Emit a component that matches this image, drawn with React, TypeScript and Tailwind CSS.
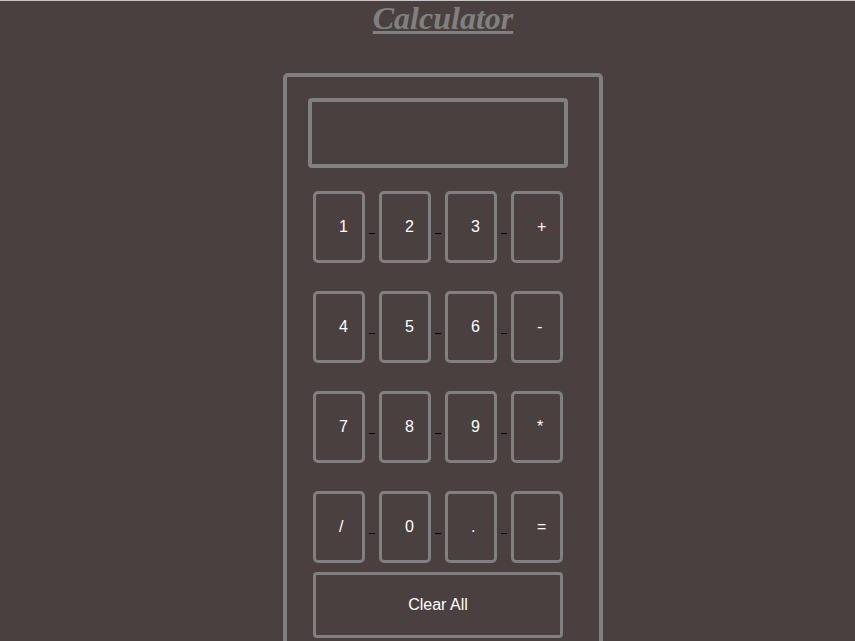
const rows = [
  ["1", "2", "3", "+"],
  ["4", "5", "6", "-"],
  ["7", "8", "9", "*"],
  ["/", "0", ".", "="],
];

function Key({ label }: { label: string }) {
  return (
    <button className="w-[52px] h-[72px] border-[3px] border-[#808080] rounded-[5px] pl-[23px] text-left text-white text-[16px] leading-[18px] bg-transparent">
      {label}
    </button>
  );
}

export default function App() {
  return (
    <div
      className="min-h-screen bg-[#4a403f] border-t border-[#c4c4c4] pl-[31px] overflow-hidden"
      style={{ fontFamily: '"Liberation Sans", Arial, sans-serif' }}
    >
      <h1
        className="text-center text-[32px] leading-[34px] font-bold italic underline text-[#808080]"
        style={{ fontFamily: '"Liberation Serif", "Times New Roman", serif' }}
      >
        Calculator
      </h1>

      <div className="mx-auto mt-[38px] w-[320px] border-4 border-[#808080] rounded-[5px] pt-[21px] pb-[24px]">
        <div className="ml-[21px] w-[260px] h-[70px] border-4 border-[#808080] rounded-[4px]" />

        <div className="ml-[26px] mt-[23px] flex flex-col gap-[28px]">
          {rows.map((row, i) => (
            <div key={i} className="flex">
              {row.map((label, j) => (
                <div key={label} className="flex">
                  <Key label={label} />
                  {j < row.length - 1 && (
                    <span className="self-end mb-[29px] mx-[4px] w-[6px] h-px bg-black" />
                  )}
                </div>
              ))}
            </div>
          ))}
        </div>

        <button className="ml-[26px] mt-[9px] w-[250px] h-[66px] border-[3px] border-[#808080] rounded-[4px] text-white text-[16px] bg-transparent">
          Clear All
        </button>
      </div>
    </div>
  );
}
